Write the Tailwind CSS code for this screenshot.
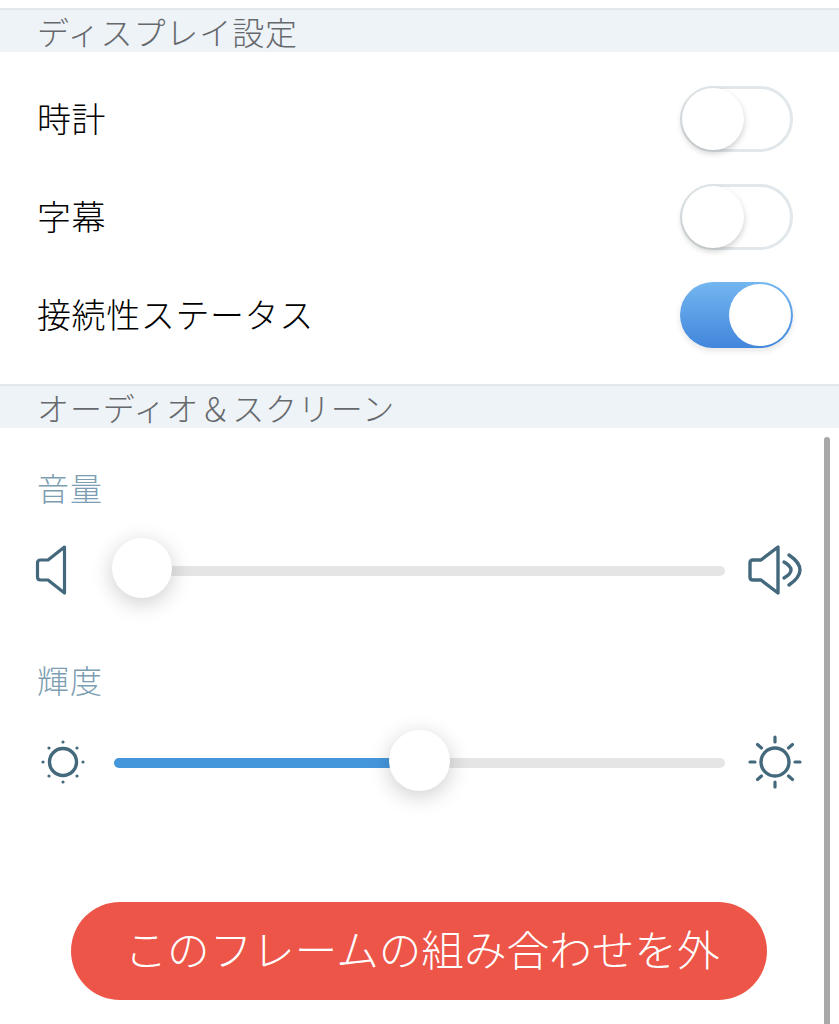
<!DOCTYPE html>
<html lang="ja">
<head>
    <meta charset="UTF-8">
    <meta name="viewport" content="width=device-width, initial-scale=1.0">
    <title>ディスプレイ設定</title>
    <script src="https://cdn.jsdelivr.net/npm/@tailwindcss/browser@4"></script>
</head>
<body class="bg-white overflow-hidden font-['Noto_Sans_CJK_JP','Noto_Sans',sans-serif]">
    <div class="relative w-[839px] h-[1024px] overflow-hidden pt-2">
        <!-- ディスプレイ設定 -->
        <div class="h-[44px] border-t-2 border-[#e3e8ec] bg-[#eef3f8] pl-[37px] text-[32px] leading-[42px] font-light text-[#66696c] tracking-[0.9px]">ディスプレイ設定</div>

        <div class="pt-[18px] pb-[20px]">
            <div class="h-[98px] flex items-center justify-between pl-[37px] pr-[46px]">
                <span class="text-[34px] leading-[46px] pb-[3px] font-light text-black tracking-[0.6px]">時計</span>
                <div class="relative w-[113px] h-[66px] rounded-full border-[3px] border-[#e1e7ea] bg-white">
                    <div class="absolute -left-px -top-px w-[62px] h-[62px] rounded-full bg-white shadow-[0_3px_6px_rgba(0,0,0,0.2)]"></div>
                </div>
            </div>
            <div class="h-[98px] flex items-center justify-between pl-[37px] pr-[46px]">
                <span class="text-[34px] leading-[46px] pb-[3px] font-light text-black tracking-[0.6px]">字幕</span>
                <div class="relative w-[113px] h-[66px] rounded-full border-[3px] border-[#e1e7ea] bg-white">
                    <div class="absolute -left-px -top-px w-[62px] h-[62px] rounded-full bg-white shadow-[0_3px_6px_rgba(0,0,0,0.2)]"></div>
                </div>
            </div>
            <div class="h-[98px] flex items-center justify-between pl-[37px] pr-[46px]">
                <span class="text-[34px] leading-[46px] pb-[3px] font-light text-black tracking-[0.6px]">接続性ステータス</span>
                <div class="relative w-[113px] h-[66px] rounded-full bg-gradient-to-b from-[#74b6f0] to-[#4186db] shadow-[0_3px_6px_rgba(0,0,0,0.1)]">
                    <div class="absolute right-[2px] top-[2px] w-[62px] h-[62px] rounded-full bg-white"></div>
                </div>
            </div>
        </div>

        <!-- オーディオ&スクリーン -->
        <div class="h-[44px] border-t-2 border-[#e3e8ec] bg-[#eef3f8] pl-[37px] text-[32px] leading-[42px] font-light text-[#66696c] tracking-[0.9px]">オーディオ＆スクリーン</div>

        <div class="pl-[38px] pt-[35px]">
            <div class="mb-[9px] -ml-[1px] text-[32px] leading-[48px] font-light text-[#7d9eb2] tracking-[1px]">音量</div>
            <div class="h-[96px] flex items-center">
                <div class="w-[76px] flex shrink-0">
                    <svg class="-ml-[4px] mt-[3px]" width="36" height="52" viewBox="0 0 36 52" fill="none" stroke="#44697c" stroke-width="3.2" stroke-linejoin="round">
                        <path d="M30.5 3 L14 16 H6.5 Q3.5 16 3.5 19 V33 Q3.5 36 6.5 36 H14 L30.5 49 Z"/>
                    </svg>
                </div>
                <div class="relative w-[611px] h-[10px] mt-[6px] rounded-full bg-[#e5e5e5]">
                    <div class="absolute left-[-2px] top-[-28px] w-[60px] h-[60px] rounded-full bg-white shadow-[0_5px_22px_rgba(0,0,0,0.2)]"></div>
                </div>
                <svg class="ml-[23px] mt-[3px]" width="56" height="52" viewBox="0 0 56 52" fill="none" stroke="#44697c" stroke-width="3.4" stroke-linecap="round" stroke-linejoin="round">
                    <path d="M30 3 L13 16 H5 Q2 16 2 19 V33 Q2 36 5 36 H13 L30 49 Z"/>
                    <path d="M36 18 Q50 26 36 34"/>
                    <path d="M41 11 Q63 26 41 41"/>
                </svg>
            </div>
            <div class="mt-[39px] mb-[9px] -ml-[1px] text-[32px] leading-[48px] font-light text-[#7d9eb2] tracking-[1px]">輝度</div>
            <div class="h-[96px] flex items-center">
                <div class="w-[76px] flex shrink-0">
                    <svg class="ml-[3px] mt-[4px]" width="44" height="44" viewBox="0 0 44 44" fill="none" stroke="#44697c">
                        <circle cx="22" cy="22" r="13.5" stroke-width="3.4"/>
                        <g fill="#44697c" stroke="none">
                            <circle cx="22" cy="2" r="1.6"/>
                            <circle cx="22" cy="42" r="1.6"/>
                            <circle cx="2" cy="22" r="1.6"/>
                            <circle cx="42" cy="22" r="1.6"/>
                            <circle cx="8" cy="8" r="1.6"/>
                            <circle cx="36" cy="8" r="1.6"/>
                            <circle cx="8" cy="36" r="1.6"/>
                            <circle cx="36" cy="36" r="1.6"/>
                        </g>
                    </svg>
                </div>
                <div class="relative w-[611px] h-[10px] mt-[6px] rounded-full bg-[#e5e5e5]">
                    <div class="w-[280px] h-full rounded-full bg-[#4597dc]"></div>
                    <div class="absolute left-[275px] top-[-28px] w-[61px] h-[61px] rounded-full bg-white shadow-[0_5px_22px_rgba(0,0,0,0.2)]"></div>
                </div>
                <svg class="ml-[23px] mt-[4px]" width="54" height="54" viewBox="0 0 54 54" fill="none" stroke="#44697c" stroke-linecap="round">
                    <circle cx="27" cy="27" r="14" stroke-width="3.4"/>
                    <g stroke-width="3.2">
                        <path d="M27 2 V7"/>
                        <path d="M27 47 V52"/>
                        <path d="M2 27 H7"/>
                        <path d="M47 27 H52"/>
                        <path d="M9.5 9.5 L13.5 13"/>
                        <path d="M44.5 9.5 L40.5 13"/>
                        <path d="M9.5 44.5 L13.5 41"/>
                        <path d="M44.5 44.5 L40.5 41"/>
                    </g>
                </svg>
            </div>
        </div>

        <div class="mt-[94px] ml-[71px] w-[696px] h-[98px] rounded-full bg-[#ec5548] flex items-center justify-center pl-[6px] pb-[6px] text-[42.6px] font-light text-white whitespace-nowrap">このフレームの組み合わせを外</div>

        <!-- scrollbar -->
        <div class="absolute left-[824px] top-[437px] w-[6px] h-[600px] rounded-full bg-[#a8a8a8]"></div>
    </div>
</body>
</html>
